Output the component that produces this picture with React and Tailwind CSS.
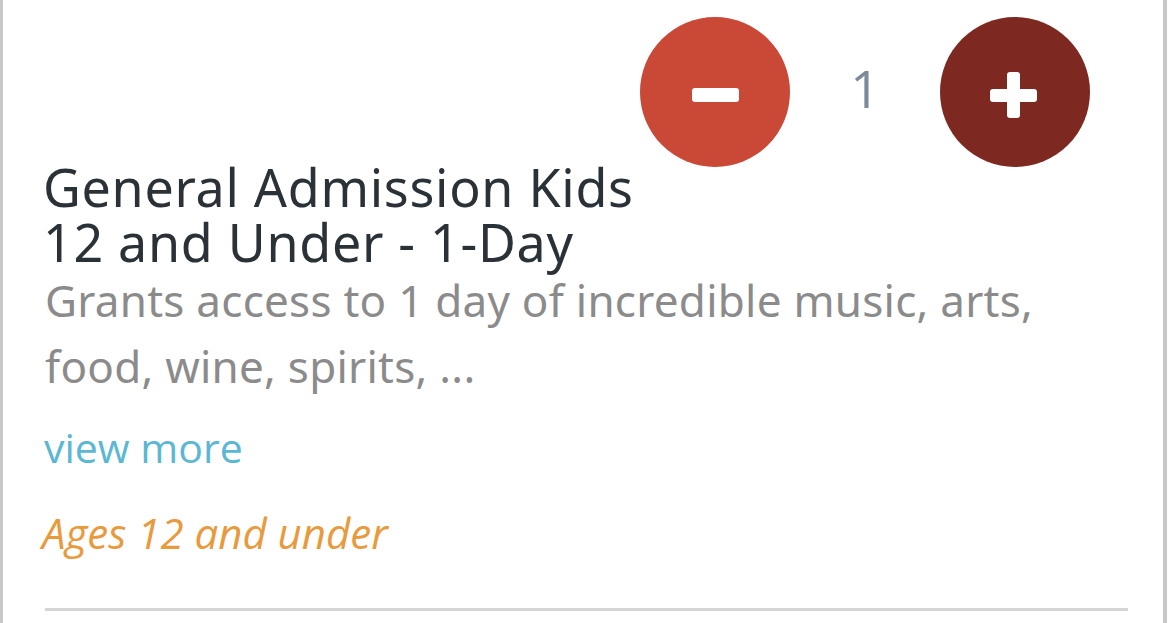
import React, { useState } from 'react';

const font = { fontFamily: '"Noto Sans", "Open Sans", sans-serif' };
const italicFont = { fontFamily: '"Open Sans", "Noto Sans", sans-serif' };

const TicketRow = () => {
  const [qty, setQty] = useState(1);

  return (
    <div className="w-[1170px] h-[623px] bg-white overflow-hidden" style={font}>
      <div className="w-[1167px] h-full border-l-[3px] border-r-[4px] border-[#c8c8c8] pl-[39px] pr-[35px] flex flex-col">
        {/* Quantity stepper */}
        <div className="flex items-center justify-end pt-[17px] pr-[38px] -mb-[8px]">
          <button
            onClick={() => setQty(Math.max(0, qty - 1))}
            className="w-[150px] h-[150px] rounded-full bg-[#c94836] flex items-center justify-center"
          >
            <span className="block w-[47px] h-[14px] rounded-[3px] bg-white mt-[6px]"></span>
          </button>
          <span className="w-[150px] text-center text-[52px] leading-none text-[#7d8a9b] -mt-[8px]" style={italicFont}>{qty}</span>
          <button
            onClick={() => setQty(qty + 1)}
            className="w-[150px] h-[150px] rounded-full bg-[#7d2820] relative"
          >
            <span className="absolute w-[47px] h-[13px] rounded-[3px] bg-white top-[72px] left-[50px]"></span>
            <span className="absolute w-[13px] h-[46px] rounded-[3px] bg-white top-[55px] left-[67px]"></span>
          </button>
        </div>

        {/* Title */}
        <h3 className="pl-[1px] text-[52px] leading-[55px] tracking-[0.7px] text-[#2a3137]">
          General Admission Kids
          <br />
          12 and Under - 1-Day
        </h3>

        {/* Description */}
        <p className="pl-[3px] text-[44px] leading-[66px] tracking-[0.25px] text-[#8b8b8b] mt-[-2px]">
          Grants access to 1 day of incredible music, arts,
          <br />
          food, wine, spirits, ...
        </p>

        <a className="pl-[2px] mt-[18px] text-[41px] leading-[60px] text-[#5bb7d3]" style={italicFont}>view more</a>

        <p className="mt-[26px] text-[42px] leading-[60px] italic text-[#e89a3c]" style={italicFont}>Ages 12 and under</p>

        <div className="mt-auto mb-[12px] h-[3px] bg-[#d5d5d5] ml-[3px]"></div>
      </div>
    </div>
  );
};

export default function App() {
  return <TicketRow />;
}
